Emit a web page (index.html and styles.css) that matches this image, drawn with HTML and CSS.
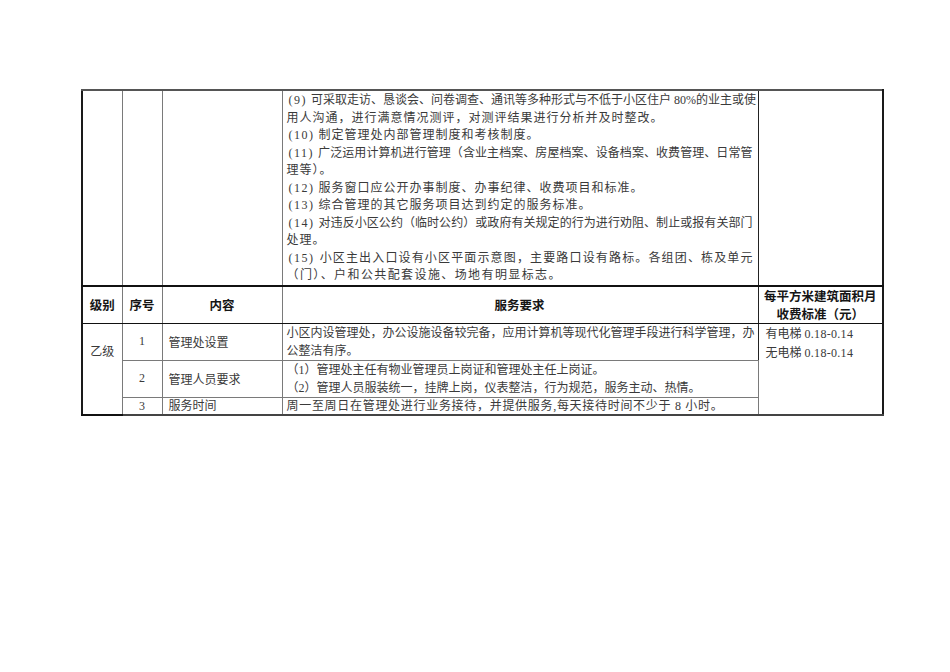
FILE: index.html
```html
<!DOCTYPE html>
<html lang="zh-CN">
<head>
<meta charset="utf-8">
<title>物业服务标准</title>
<link rel="stylesheet" href="styles.css">
</head>
<body>
<div class="page">
<table class="grid">
<colgroup><col class="c1"><col class="c2"><col class="c3"><col class="c4"><col class="c5"></colgroup>
<tr class="cont">
<td class="lvlc"></td><td></td><td></td>
<td class="req top">
<p class="jl"><span class="pn">(9)</span>可采取走访、恳谈会、问卷调查、通讯等多种形式与不低于小区住户 80%的业主或使</p>
<p class="wide">用人沟通，进行满意情况测评，对测评结果进行分析并及时整改。</p>
<p class="wide"><span class="pn">(10)</span>制定管理处内部管理制度和考核制度。</p>
<p class="jl"><span class="pn">(11)</span>广泛运用计算机进行管理（含业主档案、房屋档案、设备档案、收费管理、日常管</p>
<p class="wide">理等）。</p>
<p class="wide"><span class="pn">(12)</span>服务窗口应公开办事制度、办事纪律、收费项目和标准。</p>
<p class="wide"><span class="pn">(13)</span>综合管理的其它服务项目达到约定的服务标准。</p>
<p class="jl"><span class="pn">(14)</span>对违反小区公约（临时公约）或政府有关规定的行为进行劝阻、制止或报有关部门</p>
<p class="wide">处理。</p>
<p class="jl"><span class="pn">(15)</span>小区主出入口设有小区平面示意图，主要路口设有路标。各组团、栋及单元</p>
<p class="wide wider">（门）、户和公共配套设施、场地有明显标志。</p>
</td>
<td class="fee"></td>
</tr>
<tr class="head">
<th class="lvlc">级别</th><th>序号</th><th>内容</th><th class="req">服务要求</th><th class="fee">每平方米建筑面积月<br>收费标准（元）</th>
</tr>
<tr class="r1">
<td rowspan="3" class="lvl lvlc">乙级</td>
<td class="num">1</td>
<td class="item">管理处设置</td>
<td class="req"><p class="jl">小区内设管理处，办公设施设备较完备，应用计算机等现代化管理手段进行科学管理，办</p><p>公整洁有序。</p></td>
<td rowspan="3" class="fee rate"><p>有电梯 <span class="val">0.18-0.14</span></p><p>无电梯 <span class="val">0.18-0.14</span></p></td>
</tr>
<tr class="r2">
<td class="num">2</td>
<td class="item">管理人员要求</td>
<td class="req"><p>（1）管理处主任有物业管理员上岗证和管理处主任上岗证。</p><p>（2）管理人员服装统一，挂牌上岗，仪表整洁，行为规范，服务主动、热情。</p></td>
</tr>
<tr class="r3">
<td class="num">3</td>
<td class="item">服务时间</td>
<td class="req short"><p class="mid">周一至周日在管理处进行业务接待，并提供服务,每天接待时间不少于 8 小时。</p></td>
</tr>
</table>
</div>
</body>
</html>
```

FILE: styles.css
```css
html, body {
  margin: 0;
  padding: 0;
  background: #ffffff;
}
.page {
  padding: 89px 0 0 81px;
}
.grid {
  border-collapse: collapse;
  table-layout: fixed;
  width: 801px;
  font-family: "Liberation Serif", "Noto Sans CJK SC", serif;
  font-size: 12px;
  color: #3a3a3a;
  border-top: 2px solid #555;
  border-left: 2px solid #1a1a1a;
  border-right: 2px solid #1a1a1a;
  border-bottom: 2px solid #444;
}
.c1 { width: 40px; }
.c2 { width: 40px; }
.c3 { width: 120px; }
.c4 { width: 476px; }
.c5 { width: 125px; }
.grid td, .grid th {
  border: 1px solid #7a7a7a;
  padding: 0;
  vertical-align: middle;
}
.grid td.req, .grid th.req {
  border-right: 1px solid #222;
}
.grid p {
  margin: 0;
  white-space: nowrap;
}
.pn {
  letter-spacing: 1.5px;
  padding-left: 2px;
  padding-right: 4px;
}
.wide {
  letter-spacing: 1px;
}
.wider {
  letter-spacing: 1.4px;
}
.mid {
  letter-spacing: 0.7px;
}
.req {
  padding: 0 5px 0 4px !important;
  line-height: 18px;
}
.req.top {
  vertical-align: top;
  padding-top: 1px !important;
  line-height: 17.5px;
}
.jl {
  text-align: justify;
  text-align-last: justify;
}
.cont { height: 192px; }
.head { height: 36px; }
.r1 { height: 36px; }
.r2 { height: 36px; }
.r3 { height: 16px; }
.r3 td {
  line-height: 16px;
}
.head th {
  border-top: 2px solid #111;
  border-bottom: 1px solid #111;
  font-family: "Noto Sans CJK SC", sans-serif;
  font-weight: 700;
  font-size: 12.5px;
  color: #151515;
  text-align: center;
  line-height: 18px;
}
.lvl {
  vertical-align: top !important;
  text-align: center;
  padding-top: 18px !important;
  border-bottom: 2px solid #111 !important;
}
.num {
  text-align: center;
}
.item {
  padding-left: 6px !important;
  white-space: nowrap;
}
.rate {
  vertical-align: top !important;
  padding: 1px 0 0 7px !important;
  line-height: 19px;
}
.val {
  font-family: "Liberation Serif", serif;
  font-size: 12px;
  letter-spacing: 0.3px;
}
```
